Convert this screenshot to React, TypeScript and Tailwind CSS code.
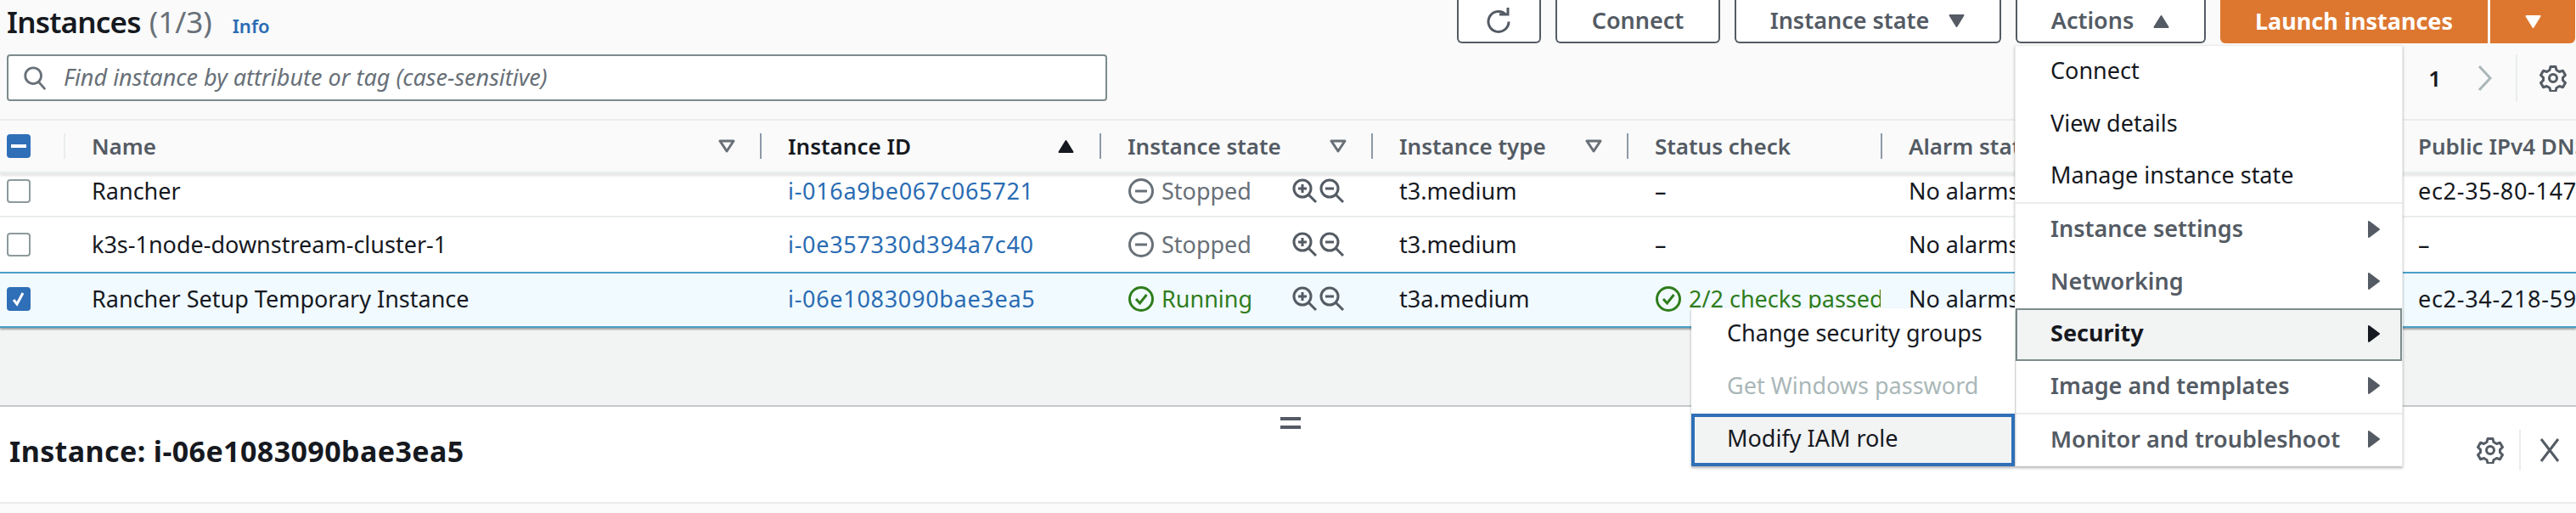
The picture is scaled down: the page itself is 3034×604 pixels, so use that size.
import type { ReactNode } from "react";

const font = { fontFamily: '"Noto Sans", sans-serif' };

// ─── icons ────────────────────────────────────────────────────────────────────
function FilterCaret() {
  return (
    <svg viewBox="0 0 20 16" className="w-5 h-4 text-[#687078]" fill="none" stroke="currentColor" strokeWidth="3" strokeLinejoin="round">
      <path d="M2 2h16l-8 12z" />
    </svg>
  );
}

function CaretUp({ className = "" }: { className?: string }) {
  return (
    <svg viewBox="0 0 21 16" className={`w-[21px] h-4 ${className}`} fill="currentColor" stroke="currentColor" strokeWidth="2" strokeLinejoin="round">
      <path d="M10.5 2l8 13h-16z" />
    </svg>
  );
}

function CaretDown() {
  return (
    <svg viewBox="0 0 21 16" className="w-[21px] h-4" fill="currentColor" stroke="currentColor" strokeWidth="2" strokeLinejoin="round">
      <path d="M2.5 1h16l-8 13z" />
    </svg>
  );
}

function CaretRight() {
  return (
    <svg viewBox="0 0 16 22" className="w-4 h-[22px]" fill="currentColor" stroke="currentColor" strokeWidth="2" strokeLinejoin="round">
      <path d="M2 2l12 9-12 9z" />
    </svg>
  );
}

function Stopped() {
  return (
    <svg viewBox="0 0 32 32" className="w-8 h-8 text-[#687078]" fill="none" stroke="currentColor" strokeWidth="3">
      <circle cx="16" cy="16" r="13.5" />
      <path d="M9 16h14" />
    </svg>
  );
}

function Running() {
  return (
    <svg viewBox="0 0 32 32" className="w-8 h-8 shrink-0 text-[#2f7d1c]" fill="none" stroke="currentColor" strokeWidth="3">
      <circle cx="16" cy="16" r="13.5" />
      <path d="M10 16l4.5 5L22.5 11" />
    </svg>
  );
}

function Zooms() {
  return (
    <span className="flex text-[#545b64]">
      <svg viewBox="0 0 32 32" className="w-8 h-8" fill="none" stroke="currentColor" strokeWidth="3">
        <circle cx="13" cy="13" r="10" />
        <path d="M20 20l9 9M13 8v10M8 13h10" />
      </svg>
      <svg viewBox="0 0 32 32" className="w-8 h-8" fill="none" stroke="currentColor" strokeWidth="3">
        <circle cx="13" cy="13" r="10" />
        <path d="M20 20l9 9M8 13h10" />
      </svg>
    </span>
  );
}

function Gear() {
  return (
    <svg viewBox="0 0 32 32" className="w-8 h-8 text-[#545b64]" fill="none" stroke="currentColor" strokeWidth="3" strokeLinejoin="round">
      <path d="M13 2.5h6l1 4 3.5 2 4-1.2 3 5.2-3 2.9v3.2l3 2.9-3 5.2-4-1.2-3.5 2-1 4h-6l-1-4-3.5-2-4 1.2-3-5.2 3-2.9v-3.2l-3-2.9 3-5.2 4 1.2 3.5-2z" />
      <circle cx="16" cy="16" r="4.5" />
    </svg>
  );
}

// ─── table bits ───────────────────────────────────────────────────────────────
const columns = "grid grid-cols-[75px_820px_400px_320px_301px_299px_600px_219px]";

function Head({ label, dark, light, icon }: { label: string; dark?: boolean; light?: boolean; icon?: ReactNode }) {
  return (
    <div className={`h-[30px] border-l-2 ${light ? "border-[#eaeded]" : "border-[#8d99a8]"} pl-[31px] pr-[29px] flex items-center justify-between whitespace-nowrap`}>
      <span className={`text-[26px] leading-[30px] font-semibold ${dark ? "text-[#16191f]" : "text-[#545b64]"}`}>{label}</span>
      {icon}
    </div>
  );
}

function Cell({ children, color = "text-[#16191f]" }: { children: ReactNode; color?: string }) {
  return (
    <div className={`pl-[33px] flex items-center gap-2 whitespace-nowrap overflow-hidden text-[27px] leading-9 ${color}`}>
      {children}
    </div>
  );
}

type Row = {
  name: string;
  id: string;
  running?: boolean;
  type: string;
  status: string;
  dns: string;
};

function InstanceRow({ row, className, selected }: { row: Row; className: string; selected?: boolean }) {
  const passed = row.status !== "–";
  return (
    <div className={`${columns} ${className}`}>
      <div className="pl-2 flex items-center">
        {selected ? (
          <span className="w-7 h-7 rounded bg-[#2f6fb7] flex items-center justify-center">
            <svg viewBox="0 0 20 20" className="w-5 h-5" fill="none" stroke="white" strokeWidth="3">
              <path d="M4 11l4 5 7-13" />
            </svg>
          </span>
        ) : (
          <span className="w-7 h-7 rounded border-2 border-[#8d9a9c] bg-white" />
        )}
      </div>
      <Cell>{row.name}</Cell>
      <Cell color="text-[#2a6cb3] tracking-[0.7px]">{row.id}</Cell>
      <Cell color={row.running ? "text-[#2f7d1c]" : "text-[#687078]"}>
        {row.running ? <Running /> : <Stopped />}
        <span className="w-[145px]">{row.running ? "Running" : "Stopped"}</span>
        <Zooms />
      </Cell>
      <Cell>{row.type}</Cell>
      <Cell color={passed ? "text-[#2f7d1c]" : "text-[#16191f]"}>
        {passed && <Running />}
        {row.status}
      </Cell>
      <Cell>No alarms</Cell>
      <Cell color="text-[#16191f] tracking-[0.7px]">{row.dns}</Cell>
    </div>
  );
}

// ─── menus ────────────────────────────────────────────────────────────────────
function MenuItem({
  label,
  height = "h-[62px]",
  strong,
  sub,
  active,
  disabled,
  pad = "pl-[41px]",
}: {
  label: string;
  height?: string;
  strong?: boolean;
  sub?: boolean;
  active?: boolean;
  disabled?: boolean;
  pad?: string;
}) {
  let color = "text-[#16191f]";
  if (strong) color = "text-[#545b64] font-semibold";
  if (active) color = "text-[#16191f] font-bold bg-[#f2f3f3] border-2 border-[#7d8b8c] pr-[23px]";
  else color += " pr-[25px]";
  if (disabled) color = "text-[#aab7b8]";
  return (
    <div className={`${height} pb-[3px] flex items-center justify-between text-[27px] whitespace-nowrap ${pad} ${color}`}>
      <span>{label}</span>
      {sub && <CaretRight />}
    </div>
  );
}

const rows: Row[] = [
  { name: "Rancher", id: "i-016a9be067c065721", type: "t3.medium", status: "–", dns: "ec2-35-80-147-" },
  { name: "k3s-1node-downstream-cluster-1", id: "i-0e357330d394a7c40", type: "t3.medium", status: "–", dns: "–" },
  { name: "Rancher Setup Temporary Instance", id: "i-06e1083090bae3ea5", running: true, type: "t3a.medium", status: "2/2 checks passed", dns: "ec2-34-218-59-" },
];

export default function App() {
  const button = "h-[51px] bg-white border-2 border-t-0 border-[#545b64] rounded-b-md flex items-center justify-center gap-[22px] text-[27px] font-semibold text-[#545b64] whitespace-nowrap";

  return (
    <div style={font} className="relative w-[3034px] h-[604px] overflow-hidden bg-[#fafafa] flex flex-col">
      {/* Title row */}
      <div className="h-[64px] flex items-start">
        <div className="flex items-baseline pl-2 whitespace-nowrap">
          <span className="text-[35px] font-semibold tracking-[-0.8px] text-[#16191f]">Instances</span>
          <span className="text-[35px] text-[#687078] ml-[10px]">(1/3)</span>
          <span className="text-[22px] font-semibold text-[#2a6cb3] ml-[24px]">Info</span>
        </div>
        <div className="ml-auto flex gap-[17px] pr-[1px]">
          <div className={`${button} w-[99px]`}>
            <svg viewBox="0 0 32 32" className="w-8 h-8" fill="none" stroke="currentColor" strokeWidth="3">
              <path d="M23 7.5a12 12 0 1 0 4 9" />
              <path d="M16 8h10V0" />
            </svg>
          </div>
          <div className={`${button} w-[194px]`}>Connect</div>
          <div className={`${button} w-[314px]`}>
            Instance state
            <CaretDown />
          </div>
          <div className={`${button} w-[224px]`}>
            Actions
            <CaretUp />
          </div>
          <div className="flex gap-[3px]">
            <div className="h-[51px] w-[315px] bg-[#dd7730] rounded-bl-md flex items-center justify-center text-[27px] font-bold text-white">
              Launch instances
            </div>
            <div className="h-[51px] w-[100px] bg-[#dd7730] rounded-br-md flex items-center justify-center text-white">
              <CaretDown />
            </div>
          </div>
        </div>
      </div>

      {/* Search and pagination */}
      <div className="h-[76px] flex items-start">
        <div className="ml-2 w-[1296px] h-[55px] bg-white border-2 border-[#7d8b8c] rounded flex items-center gap-[19px] pl-[16px]">
          <svg viewBox="0 0 32 32" className="w-[30px] h-[30px] text-[#687078]" fill="none" stroke="currentColor" strokeWidth="3">
            <circle cx="14" cy="13" r="10" />
            <path d="M21 21l8 9" />
          </svg>
          <span className="text-[27px] italic text-[#687078]">Find instance by attribute or tag (case-sensitive)</span>
        </div>
        <div className="ml-auto flex items-center h-[56px] pr-[11px]">
          <span className="text-[26px] font-semibold text-[#16191f]">1</span>
          <svg viewBox="0 0 19 32" className="w-[19px] h-8 ml-[42px] text-[#aab7b8]" fill="none" stroke="currentColor" strokeWidth="3">
            <path d="M3 2l13 14L3 30" />
          </svg>
          <span className="w-[2px] h-[56px] bg-[#eaeded] ml-[27px] mr-[26px]" />
          <Gear />
        </div>
      </div>

      {/* Table */}
      <div className="border-t-2 border-[#eaeded]">
        <div className={`${columns} h-[60px] items-center`}>
          <div className="pl-2">
            <span className="w-7 h-7 rounded bg-[#2f6fb7] flex items-center justify-center">
              <span className="w-[18px] h-1 bg-white" />
            </span>
          </div>
          <Head label="Name" light icon={<FilterCaret />} />
          <Head label="Instance ID" dark icon={<CaretUp className="text-[#16191f]" />} />
          <Head label="Instance state" icon={<FilterCaret />} />
          <Head label="Instance type" icon={<FilterCaret />} />
          <Head label="Status check" />
          <Head label="Alarm status" />
          <Head label="Public IPv4 DNS" />
        </div>
      </div>
      <div className="relative z-10 h-[3px] bg-[#eaeded] shadow-[0_2px_3px_rgba(0,0,0,0.12)]" />
      <div className="bg-white">
        <InstanceRow row={rows[0]} className="h-[51px] pb-[9px] border-b-2 border-[#eaeded]" />
        <InstanceRow row={rows[1]} className="h-[64px]" />
        <InstanceRow row={rows[2]} selected className="relative h-[66px] pb-[2px] bg-[#f1faff] border-y-2 border-y-[#4a9fc8] shadow-[0_2px_2px_rgba(0,0,0,0.35)]" />
      </div>

      {/* Empty band */}
      <div className="h-[93px] bg-[#f2f3f3] border-b-2 border-[#c4c9cc]" />

      {/* Details panel */}
      <div className="h-[114px] bg-white border-b-2 border-[#eaeded] flex items-center justify-between pl-[11px] pr-[15px]">
        <span className="text-[34px] font-bold tracking-[0.4px] text-[#16191f] -mt-[8px]">Instance: i-06e1083090bae3ea5</span>
        <div className="flex items-center -mt-[10px]">
          <Gear />
          <span className="w-[2px] h-12 bg-[#eaeded] ml-[18px] mr-[18px]" />
          <svg viewBox="0 0 32 32" className="w-8 h-8 text-[#545b64]" fill="none" stroke="currentColor" strokeWidth="3">
            <path d="M6 3l20 26M26 3L6 29" />
          </svg>
        </div>
      </div>

      {/* Split handle */}
      <div className="absolute left-[1508px] top-[491px] w-[24px] h-[14px] border-y-4 border-[#545b64]" />

      {/* Actions menu */}
      <div className="absolute z-20 left-[2373px] top-[53px] w-[457px] bg-white border border-[#eaeded] border-b-0 shadow-[0_2px_3px_rgba(0,0,0,0.3)]">
        <MenuItem label="Connect" />
        <MenuItem label="View details" />
        <MenuItem label="Manage instance state" height="h-[60px]" />
        <div className="h-[2px] bg-[#eaeded]" />
        <MenuItem label="Instance settings" strong sub />
        <MenuItem label="Networking" height="h-[61px]" strong sub />
        <MenuItem label="Security" pad="pl-[39px]" active sub />
        <MenuItem label="Image and templates" height="h-[61px]" strong sub />
        <div className="h-[2px] bg-[#eaeded]" />
        <MenuItem label="Monitor and troubleshoot" height="h-[61px]" strong sub />
      </div>

      {/* Security submenu */}
      <div className="absolute z-20 left-[1992px] top-[363px] w-[381px] bg-white shadow-[0_2px_3px_rgba(0,0,0,0.3)]">
        <MenuItem label="Change security groups" pad="pl-[42px]" />
        <MenuItem label="Get Windows password" pad="pl-[42px]" disabled />
        <div className="h-[62px] pb-[3px] bg-[#f2f3f3] border-4 border-[#2f6fb7] flex items-center pl-[38px] text-[27px] text-[#16191f]">
          Modify IAM role
        </div>
      </div>
    </div>
  );
}
